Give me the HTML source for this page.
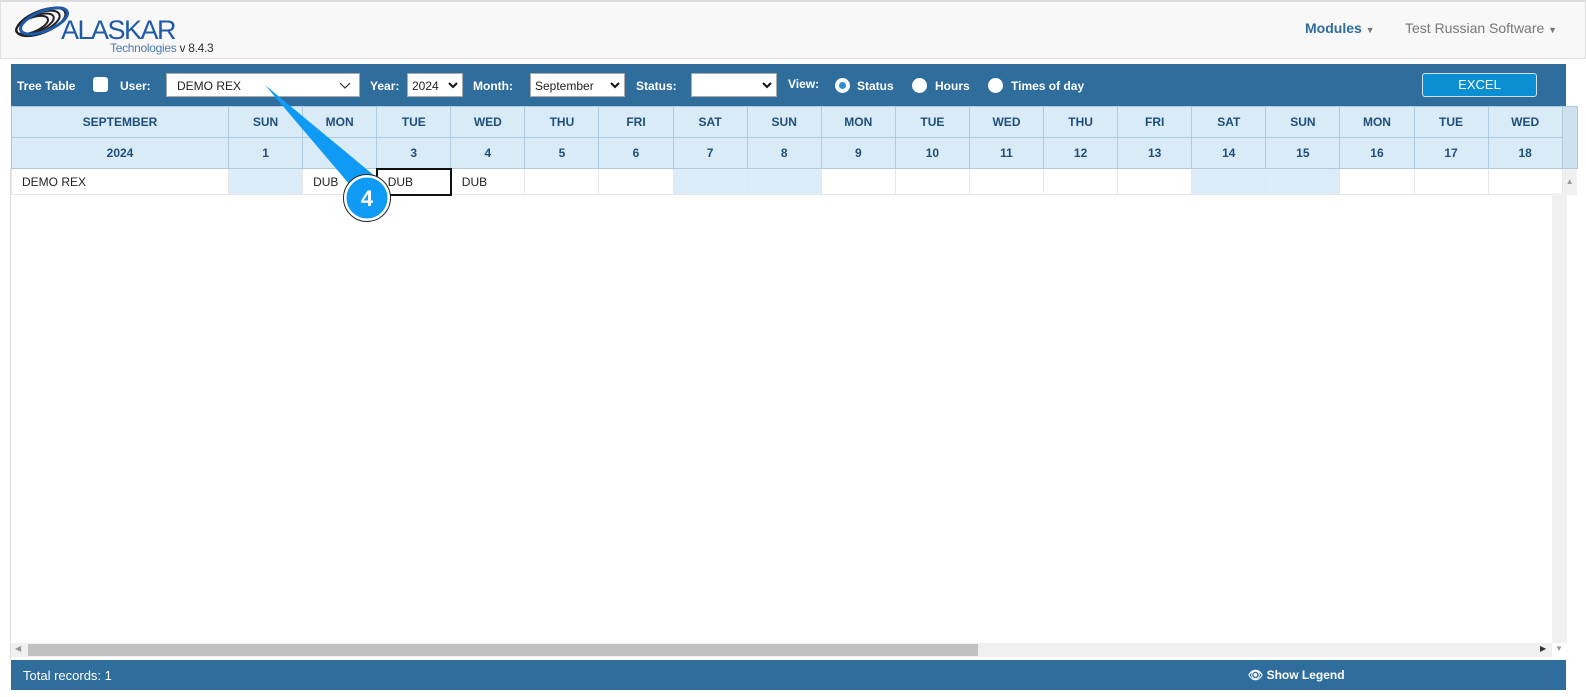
<!DOCTYPE html>
<html><head><meta charset="utf-8"><style>
*{box-sizing:border-box;margin:0;padding:0}
body{width:1586px;height:697px;background:#fff;font-family:"Liberation Sans",Arial,sans-serif;position:relative;overflow:hidden}
.nav{position:absolute;left:0;top:0;width:1586px;height:59px;background:#f8f8f8;border:1px solid #e0e0e0;border-top:2px solid #ddd}
.tb{position:absolute;left:11px;top:64px;width:1555px;height:42px;background:#2e6d9c;color:#fff;font-weight:bold;font-size:12px}
.tb span{position:absolute;top:15px}
.sel{position:absolute;background:#fff;border:1px solid #aaa;height:24px;top:9px;color:#222;font-weight:normal;font-size:12px;padding:5px 10px}
.chev{position:absolute;right:6px;top:8px}
.radio{position:absolute;top:14px;width:15px;height:15px;border-radius:50%;background:#fff}
table{position:absolute;left:11px;top:106px;border-collapse:collapse;table-layout:fixed}
td{border:1px solid #aecbe0;height:31px;text-align:center;font-size:12px;font-weight:bold;color:#1f4e79;background:#d9ebf7}
tr.d td{height:26px;border:1px solid #e6e6e6;background:#fff;font-weight:normal;color:#222;text-align:left;padding-left:10px}
tr.d td.w{background:#dcecf8}
.foot{position:absolute;left:11px;top:660px;width:1555px;height:30px;background:#2e6d9c;color:#fff;font-size:13px}
</style></head><body>
<div class="nav">
<svg style="position:absolute;left:10px;top:4px" width="60" height="34" viewBox="0 0 60 34"><g fill="none" stroke="#222" stroke-width="2"><ellipse cx="30" cy="16" rx="26" ry="11" transform="rotate(-22 30 16)"/><ellipse cx="27" cy="17" rx="23" ry="9.5" transform="rotate(-22 27 17)"/><ellipse cx="24" cy="18" rx="20" ry="8" transform="rotate(-22 24 18)"/><ellipse cx="21" cy="19" rx="17" ry="7" transform="rotate(-22 21 19)"/></g><ellipse cx="33" cy="15" rx="25" ry="10" transform="rotate(-22 33 15)" fill="none" stroke="#1e5aa8" stroke-width="3"/></svg>
<div style="position:absolute;left:60px;top:13px;font-size:27px;color:#1e5aa8;letter-spacing:-1.5px">ALASKAR</div>
<div style="position:absolute;left:109px;top:39px;font-size:12px;color:#4a7ab0;letter-spacing:-0.3px">Technologies <span style="color:#333">v 8.4.3</span></div>
<div style="position:absolute;left:1304px;top:18px;font-size:14px;color:#2e6d9c;font-weight:bold">Modules <span style="font-size:9px;color:#777">▼</span></div>
<div style="position:absolute;left:1404px;top:18px;font-size:14px;color:#777">Test Russian Software <span style="font-size:9px">▼</span></div>
</div>
<div class="tb">
<span style="left:6px">Tree Table</span>
<div style="position:absolute;left:82px;top:13px;width:15px;height:15px;background:#fff;border-radius:3px"></div>
<span style="left:109px">User:</span>
<div class="sel" style="left:155px;width:194px">DEMO REX<svg class="chev" width="12" height="7" viewBox="0 0 12 7" style="right:8px"><path d="M1 1l5 5 5-5" fill="none" stroke="#333" stroke-width="1.2"/></svg></div>
<span style="left:359px">Year:</span>
<div class="sel" style="left:396px;width:56px;padding-left:4px">2024<svg class="chev" width="10" height="7" viewBox="0 0 10 7" style="right:4px"><path d="M1 1l4 4 4-4" fill="none" stroke="#111" stroke-width="2"/></svg></div>
<span style="left:462px">Month:</span>
<div class="sel" style="left:519px;width:95px;padding-left:4px">September<svg class="chev" width="10" height="7" viewBox="0 0 10 7" style="right:4px"><path d="M1 1l4 4 4-4" fill="none" stroke="#111" stroke-width="2"/></svg></div>
<span style="left:625px">Status:</span>
<div class="sel" style="left:680px;width:86px"><svg class="chev" width="10" height="7" viewBox="0 0 10 7" style="right:4px"><path d="M1 1l4 4 4-4" fill="none" stroke="#111" stroke-width="2"/></svg></div>
<span style="left:777px;top:13px">View:</span>
<div class="radio" style="left:824px"><div style="margin:4px;width:7px;height:7px;border-radius:50%;background:#2b8fd6"></div></div>
<span style="left:846px">Status</span>
<div class="radio" style="left:901px"></div><span style="left:924px">Hours</span>
<div class="radio" style="left:977px"></div><span style="left:1000px">Times of day</span>
<div style="position:absolute;left:1411px;top:9px;width:115px;height:24px;background:#0a8fd3;border:1px solid #cfe3f2;border-radius:3px;text-align:center;font-weight:normal;font-size:13px;line-height:21px">EXCEL</div>
</div>
<table>
<colgroup><col style="width:217px"><col span="18" style="width:74.1px"><col style="width:15px"></colgroup>
<tr><td>SEPTEMBER</td><td>SUN</td><td>MON</td><td>TUE</td><td>WED</td><td>THU</td><td>FRI</td><td>SAT</td><td>SUN</td><td>MON</td><td>TUE</td><td>WED</td><td>THU</td><td>FRI</td><td>SAT</td><td>SUN</td><td>MON</td><td>TUE</td><td>WED</td><td style="background:#cfe0ee" rowspan="2"></td></tr>
<tr><td>2024</td><td>1</td><td>2</td><td>3</td><td>4</td><td>5</td><td>6</td><td>7</td><td>8</td><td>9</td><td>10</td><td>11</td><td>12</td><td>13</td><td>14</td><td>15</td><td>16</td><td>17</td><td>18</td></tr>
<tr class="d"><td>DEMO REX</td><td class="w"></td><td>DUB</td><td style="border:2px solid #111">DUB</td><td>DUB</td><td></td><td></td><td class="w"></td><td class="w"></td><td></td><td></td><td></td><td></td><td></td><td class="w"></td><td class="w"></td><td></td><td></td><td></td><td style="background:#f0f0f0;border:none;color:#999;font-size:8px;padding-left:3px">▲</td></tr>
</table>
<div style="position:absolute;left:1552px;top:193px;width:15px;height:450px;background:#f0f0f0"></div>
<div style="position:absolute;left:10px;top:168px;width:1px;height:492px;background:#ddd"></div>
<div style="position:absolute;left:11px;top:643px;width:1541px;height:14px;background:#f0f0f0"></div>
<div style="position:absolute;left:28px;top:644px;width:950px;height:12px;background:#c1c1c1"></div>
<div style="position:absolute;left:15px;top:644px;font-size:8px;color:#999">◀</div>
<div style="position:absolute;left:1540px;top:644px;font-size:8px;color:#333">▶</div>
<div style="position:absolute;left:1555px;top:644px;font-size:8px;color:#999">▼</div>
<div class="foot"><span style="position:absolute;left:12px;top:8px">Total records: 1</span><span style="position:absolute;left:1237px;top:8px;font-size:12px;font-weight:bold">👁 Show Legend</span></div>
<svg style="position:absolute;left:0;top:0" width="1586" height="697"><polygon points="265,85 350,185 382,182" fill="#0f9bf5"/><circle cx="367" cy="198" r="22" fill="#0f9bf5" stroke="#fff" stroke-width="3"/><circle cx="367" cy="198" r="23.5" fill="none" stroke="#222" stroke-width="1"/><text x="367" y="206" text-anchor="middle" font-family="Liberation Sans" font-weight="bold" font-size="22" fill="#fff">4</text></svg>
</body></html>
